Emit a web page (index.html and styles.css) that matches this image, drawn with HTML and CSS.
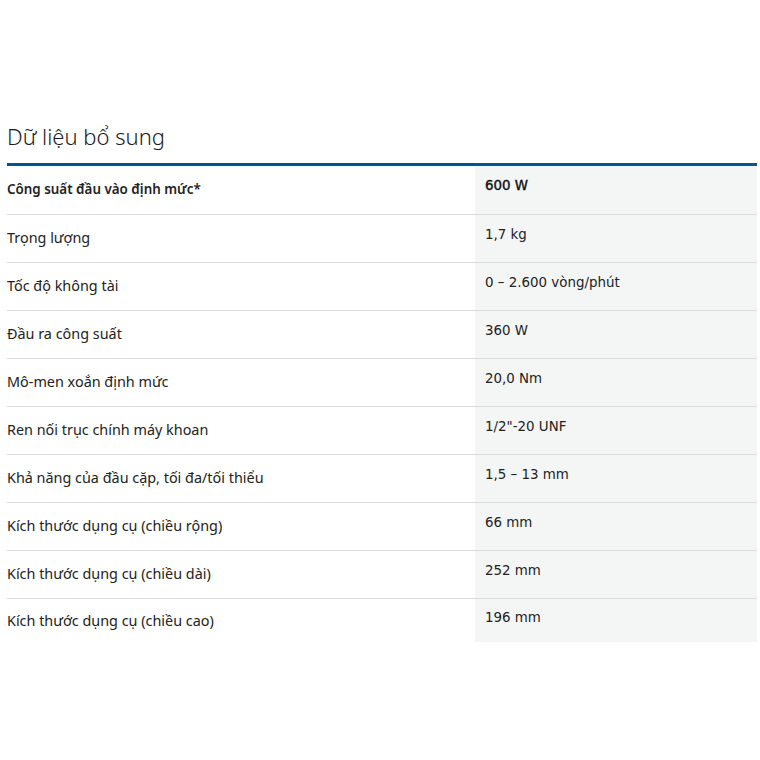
FILE: index.html
```html
<!DOCTYPE html>
<html lang="vi">
<head>
<meta charset="utf-8">
<link rel="stylesheet" href="styles.css">
</head>
<body>
<section class="spec">
  <h2 class="spec-title">Dữ liệu bổ sung</h2>
  <table class="spec-table">
    <tbody>
      <tr class="bold"><th>Công suất đầu vào định mức*</th><td>600 W</td></tr>
      <tr><th>Trọng lượng</th><td>1,7 kg</td></tr>
      <tr><th>Tốc độ không tài</th><td>0 – 2.600 vòng/phút</td></tr>
      <tr><th>Đầu ra công suất</th><td>360 W</td></tr>
      <tr><th>Mô-men xoắn định mức</th><td>20,0 Nm</td></tr>
      <tr><th>Ren nối trục chính máy khoan</th><td>1/2"-20 UNF</td></tr>
      <tr><th>Khả năng của đầu cặp, tối đa/tối thiểu</th><td>1,5 – 13 mm</td></tr>
      <tr><th>Kích thước dụng cụ (chiều rộng)</th><td>66 mm</td></tr>
      <tr><th>Kích thước dụng cụ (chiều dài)</th><td>252 mm</td></tr>
      <tr><th>Kích thước dụng cụ (chiều cao)</th><td>196 mm</td></tr>
    </tbody>
  </table>
</section>
</body>
</html>
```

FILE: styles.css
```css
html, body {
  margin: 0;
  padding: 0;
  background: #fff;
}
body {
  font-family: "Noto Sans", "Open Sans", sans-serif;
  color: #222;
}
.spec {
  padding: 116px 3px 0 7px;
}
.spec-title {
  margin: 0;
  font-weight: 300;
  font-size: 22px;
  line-height: 40px;
  color: #1a1a1a;
  padding-bottom: 7px;
  border-bottom: 3px solid #005691;
}
.spec-table {
  width: 100%;
  border-collapse: collapse;
}
.spec-table th,
.spec-table td {
  box-sizing: border-box;
  height: 48px;
  vertical-align: middle;
  text-align: left;
  border-bottom: 1px solid #dcdcdc;
}
.spec-table th {
  width: 468px;
  padding: 0 0 2px 0;
  font-weight: 400;
  font-size: 14.4px;
  color: #222;
}
.spec-table td {
  background: #f4f5f5;
  padding: 0 0 8px 10px;
  font-family: "DejaVu Sans", "Liberation Sans", sans-serif;
  font-size: 13.4px;
  color: #222;
}
.spec-table tr.bold th {
  font-weight: 600;
  font-size: 13.4px;
}
.spec-table tr.bold td {
  font-weight: 400;
  -webkit-text-stroke: 0.4px #111;
  color: #111;
}
.spec-table tr:last-child th,
.spec-table tr:last-child td {
  border-bottom: none;
  height: 44px;
  padding-bottom: 0;
}
.spec-table tr:last-child td {
  padding-bottom: 6px;
}
```
